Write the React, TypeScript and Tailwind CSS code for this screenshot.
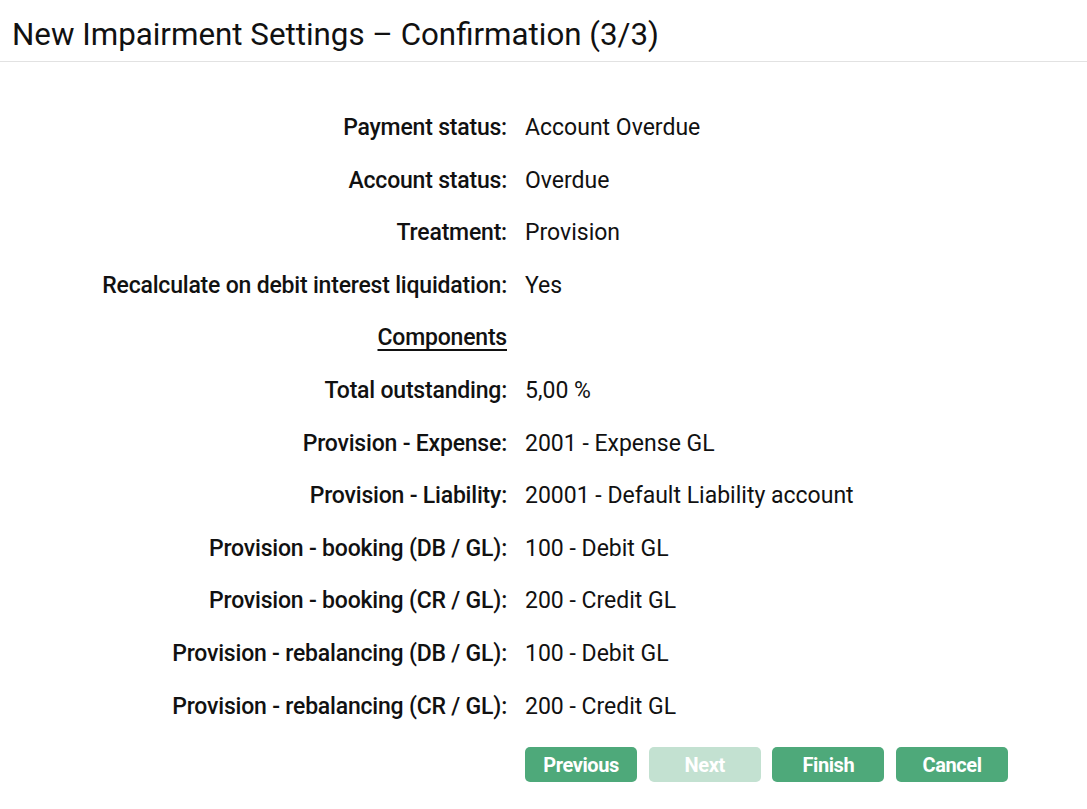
import React from "react";

const rows: { label: string; value: string; heading?: boolean }[] = [
  { label: "Payment status:", value: "Account Overdue" },
  { label: "Account status:", value: "Overdue" },
  { label: "Treatment:", value: "Provision" },
  { label: "Recalculate on debit interest liquidation:", value: "Yes" },
  { label: "Components", value: "", heading: true },
  { label: "Total outstanding:", value: "5,00 %" },
  { label: "Provision - Expense:", value: "2001 - Expense GL" },
  { label: "Provision - Liability:", value: "20001 - Default Liability account" },
  { label: "Provision - booking (DB / GL):", value: "100 - Debit GL" },
  { label: "Provision - booking (CR / GL):", value: "200 - Credit GL" },
  { label: "Provision - rebalancing (DB / GL):", value: "100 - Debit GL" },
  { label: "Provision - rebalancing (CR / GL):", value: "200 - Credit GL" },
];

const buttons = [
  { label: "Previous", disabled: false },
  { label: "Next", disabled: true },
  { label: "Finish", disabled: false },
  { label: "Cancel", disabled: false },
];

export default function App() {
  return (
    <div className="min-h-screen bg-white text-[#111] font-['Roboto',sans-serif]">
      {/* Header */}
      <div className="h-[62px] border-b border-[#e2e2e2] px-3 flex items-center">
        <h1 className="text-[31.3px] leading-none pt-[8px]">
          New Impairment Settings – Confirmation (3/3)
        </h1>
      </div>

      {/* Summary */}
      <div className="pt-[40px] grid grid-cols-[507px_1fr] gap-x-[18px] gap-y-0">
        {rows.map((r) => (
          <React.Fragment key={r.label}>
            <div
              className={
                "h-[52.6px] flex items-center justify-end text-[23px] font-medium tracking-[-0.2px] " +
                (r.heading ? "underline underline-offset-[4px]" : "")
              }
            >
              {r.label}
            </div>
            <div className="h-[52.6px] flex items-center text-[23px]">{r.value}</div>
          </React.Fragment>
        ))}
        <div />
        <div className="flex gap-[11.7px] pt-[14px]">
          {buttons.map((b) => (
            <button
              key={b.label}
              disabled={b.disabled}
              className={
                "w-[112px] h-[35px] rounded-[5px] text-white text-[20px] font-bold tracking-[-0.4px] " +
                (b.disabled ? "bg-[#c3e1d1]" : "bg-[#4ea97a]")
              }
            >
              {b.label}
            </button>
          ))}
        </div>
      </div>
    </div>
  );
}
